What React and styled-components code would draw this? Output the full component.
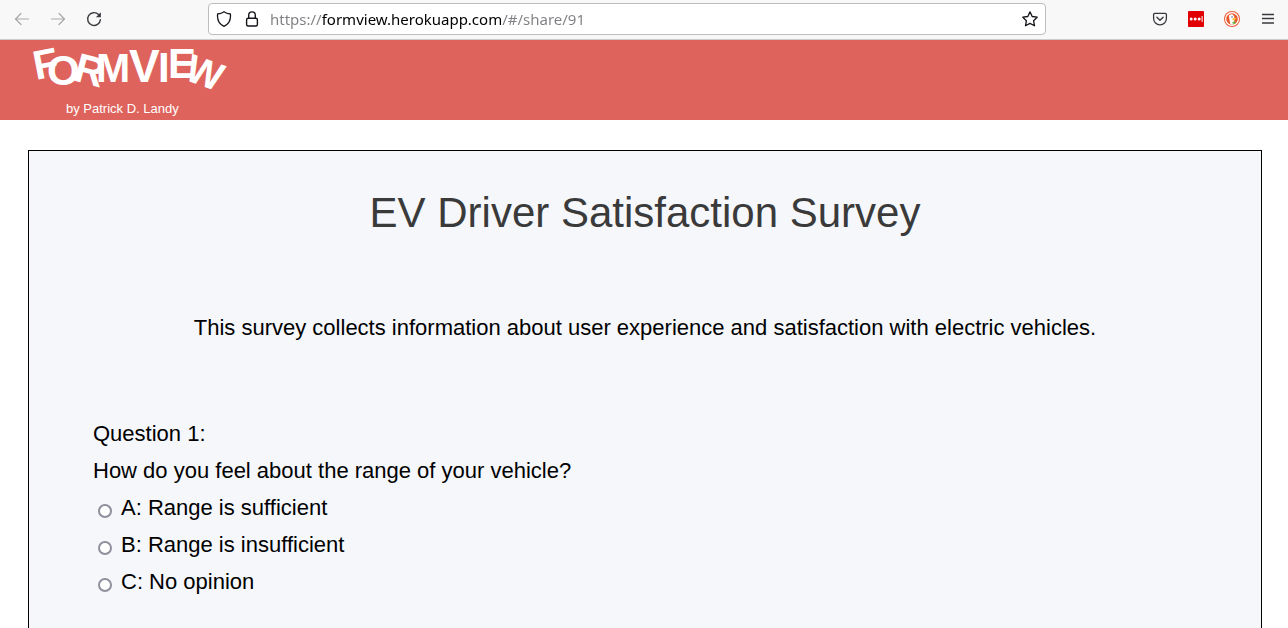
import React from "react";
import styled, { createGlobalStyle } from "styled-components";

const GlobalStyle = createGlobalStyle`
  *, *::before, *::after { box-sizing: border-box; }
  body { margin: 0; background: #fff; font-family: "Liberation Sans", Arial, sans-serif; }
`;

const Window = styled.div`
  display: flex;
  flex-direction: column;
  height: 100vh;
`;

const Toolbar = styled.nav`
  display: grid;
  grid-template-columns: 200px 1fr 234px;
  column-gap: 8px;
  align-items: center;
  flex: none;
  height: 40px;
  padding-bottom: 2px;
  background: #f8f8f8;
  border-bottom: 1px solid #cccccc;
`;

const ButtonGroup = styled.div`
  display: flex;
  align-items: center;
  justify-content: ${(p) => (p.$end ? "flex-end" : "flex-start")};
  gap: 12px;
  padding: ${(p) => (p.$end ? "0 8px 0 0" : "0 0 0 10px")};
`;

const IconButton = styled.button`
  display: flex;
  align-items: center;
  justify-content: center;
  flex: none;
  width: 24px;
  height: 24px;
  padding: 0;
  border: 0;
  background: none;
  color: ${(p) => (p.$dark ? "#15141a" : "#3a393f")};

  &:disabled { color: #a9a9ab; }
`;

const AddressBar = styled.div`
  display: flex;
  align-items: center;
  gap: 4px;
  height: 32px;
  padding: 0 3px;
  background: #fff;
  border: 1px solid #bdbdbd;
  border-radius: 4px;
`;

const AddressInput = styled.input`
  flex: 1;
  min-width: 0;
  height: 28px;
  padding: 0 2px;
  border: 0;
  outline: 0;
  font: 15px/20px "Noto Sans", sans-serif;
  color: transparent;
  caret-color: #15141a;
  background: linear-gradient(90deg, #7f7f83 0 54px, #000 54px 233px, #7f7f83 233px);
  background-clip: text;
  -webkit-background-clip: text;
`;

const Page = styled.div`
  flex: 1;
  min-height: 0;
  overflow-y: auto;
  scrollbar-width: none;
`;

const Banner = styled.header`
  height: 80px;
  padding: 0 28px;
  background: #de635c;
  color: #fff;
`;

const Wordmark = styled.svg`
  display: block;
  font-weight: 700;
  fill: currentColor;
`;

const Byline = styled.p`
  margin: 0;
  padding-left: 38px;
  font-size: 13px;
  line-height: 18px;
`;

const Card = styled.main`
  margin: 30px 26px 30px 28px;
  padding: 32px 64px 64px;
  background: #f5f7fb;
  border: 1px solid #000;
  color: #000;
  font-size: 22px;
  line-height: 37px;
`;

const Title = styled.h1`
  margin: 0;
  font-size: 42px;
  font-weight: 400;
  line-height: 60px;
  text-align: center;
  color: #3a3a3a;
`;

const Intro = styled.p`
  margin: 66px 0 69px;
  text-align: center;
`;

const Question = styled.fieldset`
  margin: 0;
  padding: 0;
  border: 0;
`;

const Legend = styled.legend`
  padding: 0;
`;

const Prompt = styled.span`
  display: block;
`;

const Option = styled.label`
  display: flex;
  align-items: center;
  gap: 9px;
  padding-left: 5px;
`;

const Radio = styled.input`
  appearance: none;
  flex: none;
  width: 14px;
  height: 14px;
  margin: 6px 0 0;
  border: 2px solid #8f8f9d;
  border-radius: 50%;
  background: #fff;

  &:checked { border-color: #0060df; box-shadow: inset 0 0 0 2px #fff; background: #0060df; }
`;

const Icon = ({ children, size = 16 }) => (
  <svg width={size} height={size} viewBox="0 0 16 16" fill="none" stroke="currentColor"
    strokeWidth="1.2" strokeLinecap="round" strokeLinejoin="round" aria-hidden="true">
    {children}
  </svg>
);

const LETTERS = [
  { c: "F", x: 8, y: 40, r: -11, s: 41 },
  { c: "O", x: 19, y: 45, r: 0, s: 42 },
  { c: "R", x: 44, y: 40, r: 15, s: 41 },
  { c: "M", x: 68, y: 42, r: 0, s: 41 },
  { c: "V", x: 101, y: 42, r: 0, s: 46 },
  { c: "I", x: 130, y: 42, r: 0, s: 42 },
  { c: "E", x: 140, y: 38, r: 0, s: 42 },
  { c: "W", x: 155, y: 39, r: 20, s: 39 },
];

const OPTIONS = ["A: Range is sufficient", "B: Range is insufficient", "C: No opinion"];

export default function App() {
  return (
    <Window>
      <GlobalStyle />
      <Toolbar aria-label="Browser">
        <ButtonGroup>
          <IconButton disabled aria-label="Back">
            <Icon><path d="M14.5 8H1.5M7 2.5L1.5 8L7 13.5" /></Icon>
          </IconButton>
          <IconButton disabled aria-label="Forward">
            <Icon><path d="M1.5 8H14.5M9 2.5L14.5 8L9 13.5" /></Icon>
          </IconButton>
          <IconButton aria-label="Reload">
            <Icon>
              <path d="M12.6 3.6A6.4 6.4 0 1 0 14.4 8.6" strokeWidth="1.4" />
              <path d="M14.9 1.2V6.200H9.900Z" fill="currentColor" stroke="none" />
            </Icon>
          </IconButton>
        </ButtonGroup>
        <AddressBar>
          <IconButton $dark aria-label="Tracking protection">
            <Icon><path d="M8 .8C9.5 2 12 2.8 14.4 3C15 8.5 13 13 8 15.3C3 13 1 8.5 1.6 3C4 2.8 6.5 2 8 .8Z" strokeWidth="1.3" /></Icon>
          </IconButton>
          <IconButton $dark aria-label="Site security">
            <Icon>
              <rect x="2.6" y="7.2" width="10.8" height="7.8" rx="1.5" strokeWidth="1.4" />
              <path d="M4.7 7V4.2A3.3 3.3 0 0 1 11.3 4.2V7" strokeWidth="1.4" />
            </Icon>
          </IconButton>
          <AddressInput aria-label="Address" defaultValue="https://formview.herokuapp.com/#/share/91" />
          <IconButton $dark aria-label="Bookmark this page">
            <Icon><path d="M8 .9L10.2 5.5L15.2 6.2L11.6 9.7L12.5 14.8L8 12.4L3.5 14.8L4.4 9.7L.8 6.2L5.8 5.5Z" strokeWidth="1.3" /></Icon>
          </IconButton>
        </AddressBar>
        <ButtonGroup $end>
          <IconButton aria-label="Save to Pocket">
            <Icon>
              <path d="M2.6 2.4H13.4Q14.4 2.4 14.4 3.4V7.5A6.4 6.4 0 0 1 1.6 7.5V3.4Q1.6 2.4 2.6 2.4Z" strokeWidth="1.3" />
              <path d="M4.9 6.2L8 9.2L11.1 6.2" strokeWidth="1.4" />
            </Icon>
          </IconButton>
          <IconButton aria-label="Password manager">
            <Icon>
              <rect width="16" height="16" rx="1" fill="#e00000" stroke="none" />
              <g fill="#fff" stroke="none">
                <circle cx="3.2" cy="8" r="1.5" /><circle cx="7.2" cy="8" r="1.5" />
                <circle cx="11.200" cy="8" r="1.5" /><rect x="13.6" y="5" width="1" height="6" />
              </g>
            </Icon>
          </IconButton>
          <IconButton aria-label="Privacy extension">
            <Icon>
              <circle cx="8" cy="8" r="8" fill="#ee5a35" stroke="none" />
              <circle cx="8" cy="8" r="6.4" fill="#e8592b" stroke="#fff" strokeWidth="1.2" />
              <path d="M4.800 4.800Q6.200 2.600 8.800 3.600Q10.800 4.800 10.400 8L10 13Q8 14.200 6.300 13Z" fill="#fff" stroke="none" />
              <path d="M8.4 7.6Q10.5 6.6 12.6 7.3Q11 9.500 8.6 9.400Z" fill="#fbc02d" stroke="none" />
              <path d="M8.300 11L11.500 10.500L11.200 13L8.500 12.600Z" fill="#5bb947" stroke="none" />
              <circle cx="8" cy="6" r=".7" fill="#2d4f8e" stroke="none" />
            </Icon>
          </IconButton>
          <IconButton aria-label="Open application menu">
            <Icon><path d="M2 3.500H14M2 7.500H14M2 12H14" strokeWidth="1.300" strokeLinecap="butt" /></Icon>
          </IconButton>
        </ButtonGroup>
      </Toolbar>

      <Page>
        <Banner>
          <Wordmark width="204" height="60" viewBox="0 0 204 60" role="img" aria-label="FormView">
            <text>
              {LETTERS.map((l) => (
                <tspan key={l.c} x={l.x} y={l.y} rotate={l.r} fontSize={l.s}>{l.c}</tspan>
              ))}
            </text>
          </Wordmark>
          <Byline>by Patrick D. Landy</Byline>
        </Banner>
        <Card>
          <Title>EV Driver Satisfaction Survey</Title>
          <Intro>This survey collects information about user experience and satisfaction with electric vehicles.</Intro>
          <Question>
            <Legend>
              <Prompt>Question 1:</Prompt>
              <Prompt>How do you feel about the range of your vehicle?</Prompt>
            </Legend>
            {OPTIONS.map((text) => (
              <Option key={text}>
                <Radio type="radio" name="question-1" />
                {text}
              </Option>
            ))}
          </Question>
        </Card>
      </Page>
    </Window>
  );
}
